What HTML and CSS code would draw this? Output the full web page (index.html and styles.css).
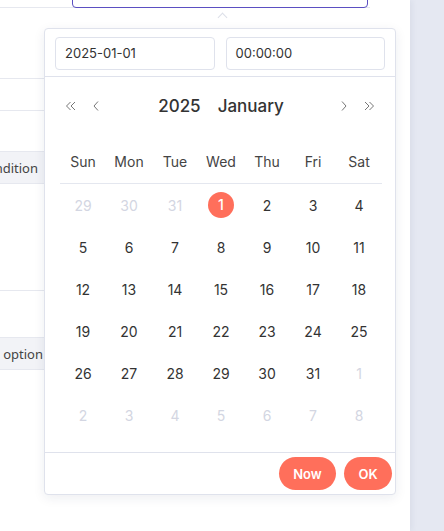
FILE: index.html
```html
<!DOCTYPE html>
<html lang="en">
<head>
<meta charset="UTF-8" />
<meta name="viewport" content="width=device-width, initial-scale=1.0"/>
<title>Date time picker</title>
<link rel="stylesheet" href="styles.css">
</head>
<body>

<div class="panel">
  <!-- таблица условий под попапом -->
  <div class="rules">
    <div class="row row-top"></div>
    <div class="row h70"></div>
    <div class="row h31"></div>
    <div class="row h40 no-line"></div>
    <div class="band band-cond"><span>Condition</span></div>
    <div class="row h106"></div>
    <div class="row h46 no-line"></div>
    <div class="band band-opt"><span>option</span></div>
  </div>

  <div class="trigger"></div>
  <div class="caret"></div>

  <div class="popup">
    <div class="popup-inputs">
      <div class="p-input">2025-01-01</div>
      <div class="p-input">00:00:00</div>
    </div>

    <div class="nav">
      <div class="nav-side">
        <button class="nav-btn" title="Previous year">
          <svg width="12" height="10" viewBox="0 0 12 10"><path d="M5.5 1 L1.5 5 L5.5 9 M10 1 L6 5 L10 9" fill="none" stroke="#777" stroke-width="1"/></svg>
        </button>
        <button class="nav-btn" title="Previous month">
          <svg width="8" height="12" viewBox="0 0 8 12"><path d="M6 1.5 L2 6 L6 10.5" fill="none" stroke="#777" stroke-width="1"/></svg>
        </button>
      </div>
      <div class="nav-title"><span>2025</span><span>January</span></div>
      <div class="nav-side">
        <button class="nav-btn" title="Next month">
          <svg width="8" height="12" viewBox="0 0 8 12"><path d="M2 1.5 L6 6 L2 10.5" fill="none" stroke="#777" stroke-width="1"/></svg>
        </button>
        <button class="nav-btn" title="Next year">
          <svg width="12" height="10" viewBox="0 0 12 10"><path d="M2 1 L6 5 L2 9 M6.5 1 L10.5 5 L6.5 9" fill="none" stroke="#777" stroke-width="1"/></svg>
        </button>
      </div>
    </div>

    <div class="calendar">
      <div class="weekdays">
        <span>Sun</span><span>Mon</span><span>Tue</span><span>Wed</span><span>Thu</span><span>Fri</span><span>Sat</span>
      </div>
      <div class="days">
        <span class="dim">29</span><span class="dim">30</span><span class="dim">31</span><span class="sel"><i>1</i></span><span>2</span><span>3</span><span>4</span>
        <span>5</span><span>6</span><span>7</span><span>8</span><span>9</span><span>10</span><span>11</span>
        <span>12</span><span>13</span><span>14</span><span>15</span><span>16</span><span>17</span><span>18</span>
        <span>19</span><span>20</span><span>21</span><span>22</span><span>23</span><span>24</span><span>25</span>
        <span>26</span><span>27</span><span>28</span><span>29</span><span>30</span><span>31</span><span class="dim">1</span>
        <span class="dim">2</span><span class="dim">3</span><span class="dim">4</span><span class="dim">5</span><span class="dim">6</span><span class="dim">7</span><span class="dim">8</span>
      </div>
    </div>

    <div class="footer">
      <button class="btn btn-now">Now</button>
      <button class="btn btn-ok">OK</button>
    </div>
  </div>
</div>

<div class="strip"></div>

</body>
</html>
```

FILE: styles.css
```css
body {
  margin: 0;
  padding: 0;
  display: flex;
  height: 531px;
  overflow: hidden;
  background: #e5e8f2;
  font-family: Inter, "Noto Sans", sans-serif;
}

/* белая панель страницы */
.panel {
  width: 410px;
  height: 531px;
  background: #fff;
  position: relative;
  box-shadow: 2px 0 6px rgba(40, 50, 90, 0.06);
}

.strip {
  flex: 1;
}

/* таблица слева */
.rules {
  width: 370px;
}

.row {
  border-bottom: 1px solid #e6e8ef;
}

.row.no-line {
  border-bottom: none;
}

.row-top { height: 7px; }
.h70 { height: 70px; }
.h31 { height: 31px; }
.h40 { height: 40px; }
.h106 { height: 106px; }
.h46 { height: 46px; }

.band {
  height: 31px;
  width: 48px;
  display: flex;
  justify-content: flex-end;
  align-items: center;
  background: #f2f3f7;
  border-top: 1px solid #e6e8ef;
  border-bottom: 1px solid #e6e8ef;
  font-family: "Noto Sans", sans-serif;
  font-size: 13px;
  color: #444;
  white-space: nowrap;
}

.band-cond span {
  margin-right: 10px;
}

.band-opt span {
  margin-right: 5px;
}

/* поле ввода сверху */
.trigger {
  position: absolute;
  left: 72px;
  top: -26px;
  width: 294px;
  height: 32px;
  border: 1px solid #5b4fc2;
  border-radius: 4px;
}

.caret {
  position: absolute;
  left: 219px;
  top: 14px;
  width: 6px;
  height: 6px;
  border-top: 1px solid #dcdfe8;
  border-left: 1px solid #dcdfe8;
  transform: rotate(45deg);
}

/* попап выбора даты */
.popup {
  position: absolute;
  left: 44px;
  top: 28px;
  width: 350px;
  height: 465px;
  background: #fff;
  border: 1px solid #dfe2ec;
  border-radius: 4px;
  box-shadow: 0 3px 12px rgba(30, 40, 80, 0.08);
  display: flex;
  flex-direction: column;
  color: #333;
}

.popup-inputs {
  display: flex;
  gap: 11px;
  padding: 8px 10px 6px;
  border-bottom: 1px solid #dfe2ec;
}

.p-input {
  flex: 1;
  height: 31px;
  border: 1px solid #dfe2ec;
  border-radius: 4px;
  padding-left: 9px;
  font-size: 13px;
  line-height: 31px;
  color: #333;
}

.nav {
  height: 58px;
  display: flex;
  align-items: center;
  justify-content: space-between;
  padding: 0 20px 0 20px;
}

.nav-side {
  display: flex;
  align-items: center;
  gap: 15px;
}

.nav-btn {
  background: none;
  border: none;
  padding: 0;
  cursor: pointer;
  display: flex;
}

.nav-title {
  display: flex;
  gap: 17px;
  font-size: 17px;
  font-weight: 500;
  color: #333;
  margin-left: 2px;
}

.calendar {
  padding: 0 13px 0 15px;
}

.weekdays {
  display: grid;
  grid-template-columns: repeat(7, 46px);
  height: 44px;
  margin-top: 4px;
  align-items: center;
  border-bottom: 1px solid #e4e7ef;
  font-size: 14px;
  color: #444;
  text-align: center;
}

.days {
  display: grid;
  grid-template-columns: repeat(7, 46px);
  grid-auto-rows: 42px;
  align-items: center;
  text-align: center;
  font-size: 14px;
  color: #333;
}

.days .dim {
  color: #d3d6e2;
}

.days .sel {
  display: flex;
  justify-content: center;
}

.days .sel i {
  font-style: normal;
  width: 26px;
  height: 26px;
  line-height: 26px;
  border-radius: 50%;
  background: #ff6f5b;
  color: #fff;
  font-weight: 500;
}

.footer {
  margin-top: auto;
  height: 41px;
  border-top: 1px solid #dfe2ec;
  display: flex;
  align-items: center;
  justify-content: flex-end;
  gap: 8px;
  padding-right: 3px;
}

.btn {
  height: 33px;
  border: none;
  border-radius: 17px;
  background: #ff6f5b;
  color: #fff;
  font-family: Inter, sans-serif;
  font-size: 13px;
  font-weight: 600;
  cursor: pointer;
}

.btn-now { width: 57px; }
.btn-ok { width: 48px; }
```
